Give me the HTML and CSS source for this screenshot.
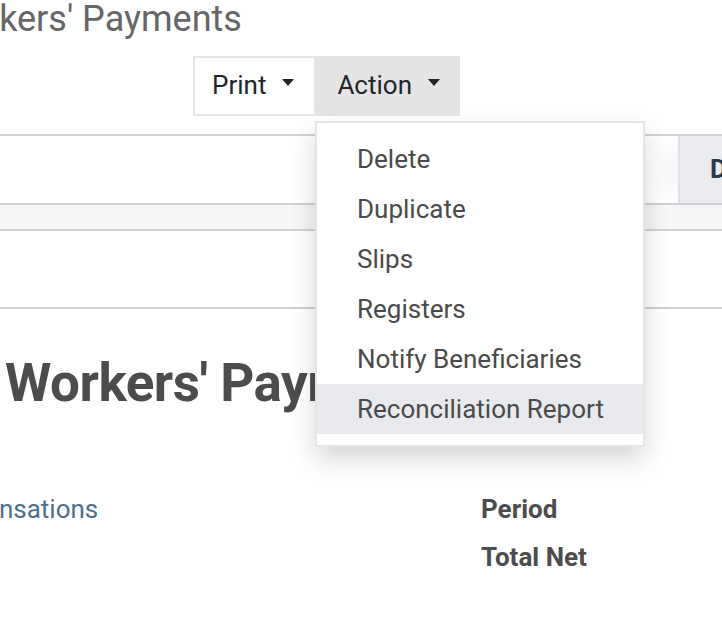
FILE: index.html
```html
<!DOCTYPE html>
<html>
<head>
<meta charset="utf-8">
<link rel="stylesheet" href="styles.css">
</head>
<body>
<div class="page">
  <div class="control-panel">
    <div class="breadcrumb">Workers' Payments</div>
    <div class="cp-buttons">
      <div class="btn btn-print"><span>Print</span><span class="caret"></span></div>
      <div class="btn btn-action"><span>Action</span><span class="caret"></span></div>
    </div>
  </div>
  <div class="statusbar">
    <div class="status-btn">Draft</div>
  </div>
  <div class="band"></div>
  <div class="button-box"></div>
  <div class="sheet">
    <h1 class="title">Workers' Payments</h1>
    <div class="fields">
      <div class="col-left">
        <a class="link">Compensations</a>
      </div>
      <div class="col-right">
        <div class="label">Period</div>
        <div class="label">Total Net</div>
      </div>
    </div>
  </div>
  <ul class="dropdown-menu">
    <li>Delete</li>
    <li>Duplicate</li>
    <li>Slips</li>
    <li>Registers</li>
    <li>Notify Beneficiaries</li>
    <li class="active">Reconciliation Report</li>
  </ul>
</div>
</body>
</html>
```

FILE: styles.css
```css
html, body {
  margin: 0;
  padding: 0;
  background: #fff;
}
body {
  font-family: Roboto, "Noto Sans", sans-serif;
  width: 722px;
  height: 620px;
  overflow: hidden;
}
.page {
  position: relative;
  width: 722px;
  height: 620px;
  overflow: hidden;
}
.control-panel {
  height: 136px;
}
.breadcrumb {
  font-size: 36px;
  line-height: 43px;
  color: #666;
  margin-left: -65px;
  margin-top: -2px;
  white-space: nowrap;
}
.cp-buttons {
  display: flex;
  margin-top: 15px;
  margin-left: 193px;
}
.btn {
  font-size: 26px;
  line-height: 39px;
  padding: 8px 18px 9px;
  color: #212529;
  display: flex;
  align-items: center;
  white-space: nowrap;
}
.btn-print {
  border: 2px solid #e3e5e8;
  background: #fff;
  padding-left: 17px;
  padding-right: 20px;
}
.btn-action {
  border: 2px solid #e4e4e4;
  background: #e4e4e4;
  padding-left: 19px;
  padding-right: 18px;
}
.caret {
  display: inline-block;
  width: 0;
  height: 0;
  border-top: 7px solid #212529;
  border-left: 6px solid transparent;
  border-right: 6px solid transparent;
  margin-left: 16px;
  margin-top: -6px;
}
.statusbar {
  border-top: 2px solid #cfd1d6;
  border-bottom: 2px solid #cfd1d6;
  height: 67px;
  display: flex;
  justify-content: flex-end;
}
.status-btn {
  box-sizing: border-box;
  width: 44px;
  border-left: 2px solid #dee1e6;
  background: #e9ebef;
  color: #2b3a4b;
  font-weight: bold;
  font-size: 26px;
  line-height: 67px;
  padding-left: 30px;
  overflow: hidden;
  white-space: nowrap;
  box-shadow: -24px 0 20px -12px rgba(0, 0, 0, 0.05);
}
.band {
  height: 24px;
  background: #f6f6f7;
  border-bottom: 2px solid #cfd1d6;
}
.button-box {
  height: 76px;
  border-bottom: 2px solid #cfd1d6;
}
.sheet {
  padding-left: 5px;
}
.title {
  margin: 0;
  margin-top: 43px;
  font-size: 53px;
  letter-spacing: -0.5px;
  line-height: 62px;
  font-weight: bold;
  color: #4c4c4c;
  white-space: nowrap;
}
.fields {
  display: flex;
  margin-top: 71px;
}
.col-left {
  width: 481px;
  margin-left: -5px;
  overflow: hidden;
}
.link {
  display: block;
  font-size: 26px;
  line-height: 48px;
  color: #4d6f8e;
  margin-left: -84px;
  white-space: nowrap;
}
.label {
  font-size: 26px;
  line-height: 48px;
  font-weight: bold;
  color: #4c4c4c;
}
.dropdown-menu {
  position: absolute;
  left: 315px;
  top: 121px;
  width: 326px;
  margin: 0;
  padding: 11px 0;
  list-style: none;
  background: #fff;
  border: 2px solid #e3e5e9;
  box-shadow: 0 12px 24px rgba(0, 0, 0, 0.16);
}
.dropdown-menu li {
  font-size: 26px;
  line-height: 50px;
  padding-left: 40px;
  color: #4a4a4a;
  white-space: nowrap;
}
.dropdown-menu li.active {
  background: #e9eaee;
}
```
